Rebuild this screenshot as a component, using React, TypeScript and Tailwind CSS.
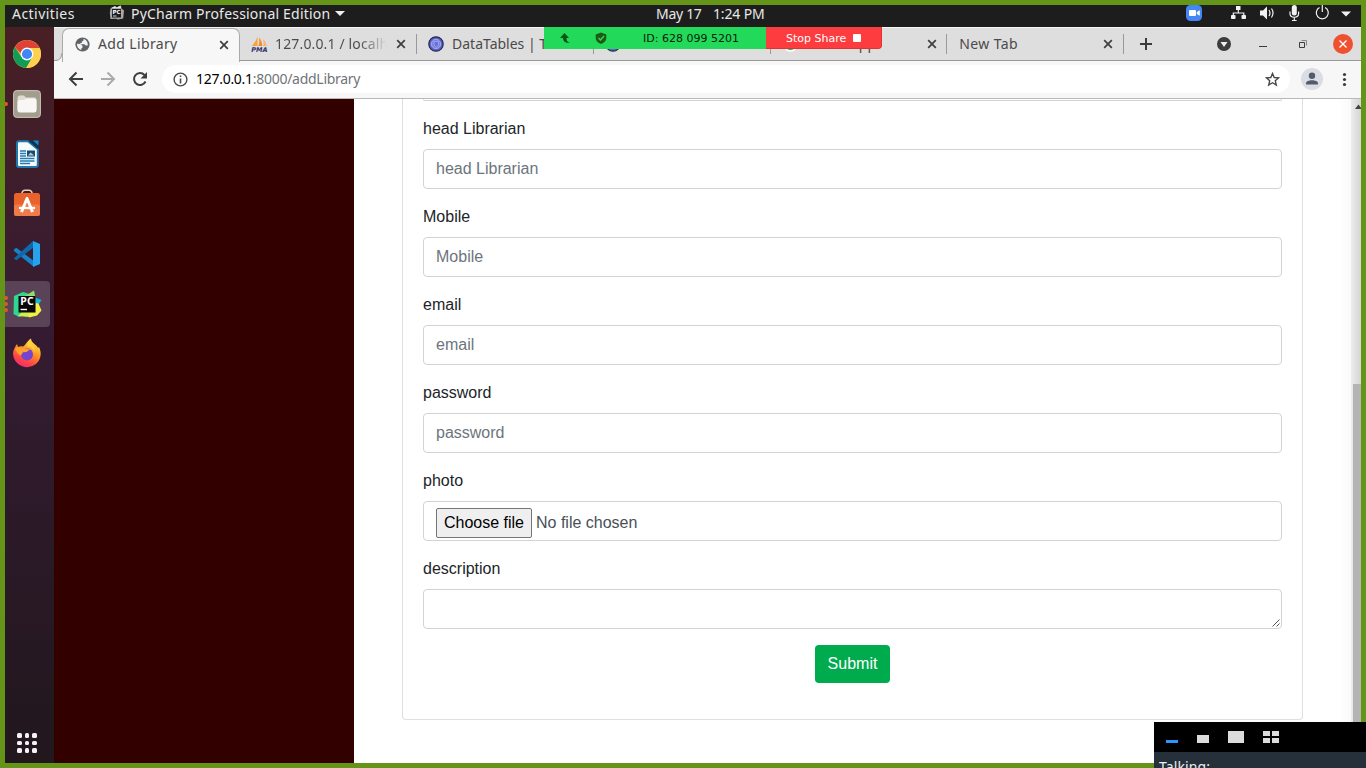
import React from "react";

type IconProps = { className?: string };

function Globe({ className = "" }: IconProps) {
  return (
    <svg className={className} width="15" height="15" viewBox="0 0 15 15">
      <circle cx="7.5" cy="7.5" r="7.1" fill="#5f6368" />
      <path d="M2 6.800 5.500 7 7.500 9v1.500l-1.200 1V13C3.800 12.500 2 10.300 2 7.600zM8.500 2v1.400L6.800 4.500v1.500H5.300v1.300h4l1.400 1.300h2C13.200 5 11 2.500 8.500 2z" fill="#f3f3f3" />
    </svg>
  );
}

function Close({ className = "" }: IconProps) {
  return (
    <svg className={className} width="10" height="10" viewBox="0 0 10 10">
      <path d="M1.200 1.200 8.800 8.800M8.800 1.200 1.200 8.800" stroke="#3c3f41" strokeWidth="1.7" />
    </svg>
  );
}

function PhpMyAdmin() {
  return (
    <svg width="17" height="16" viewBox="0 0 17 16" className="shrink-0">
      <path d="M6.500 .5V10H1C3 7.500 5 5 6.500 .5z" fill="#f9a13c" />
      <path d="M8 1.500c2 2 3.200 5 3.200 8.500H7.500C8.500 7 8.600 4.500 8 1.500z" fill="#f58a1f" />
      <path d="M12 3c2 2 3.500 4.500 3.700 7H12.200C12.800 7 12.600 5 12 3z" fill="#fbb468" />
      <text x="8.500" y="15.500" textAnchor="middle" fontFamily="DejaVu Sans" fontSize="6.500" fontWeight="bold" fontStyle="italic" fill="#31316b">PMA</text>
    </svg>
  );
}

function DataTablesMark() {
  return (
    <svg width="16" height="16" viewBox="0 0 16 16" className="shrink-0">
      <circle cx="8" cy="8" r="7.200" fill="#5960c9" stroke="#25264f" strokeWidth="1.200" />
      <circle cx="8" cy="8" r="4.700" fill="#7d84de" stroke="#a3a9ed" strokeWidth="1" />
      <path d="M6 5.500h4.500v3.500L8.500 11.500 6 9z" fill="#6a71d6" stroke="#b3b8f1" strokeWidth=".6" />
    </svg>
  );
}

function PyCharmMono() {
  return (
    <svg width="16" height="15" viewBox="0 0 16 15">
      <path d="M1.500 3.500 6 1.500l2 1 4-2 .5 3 2.500 2-.8 8L9 14.500l-2-.7L1.500 14 .800 8z" fill="#a9a9a9" />
      <path d="M2 3 6 1l1.500 1.500 4-2L12 3z" fill="#e4e4e4" />
      <rect x="3" y="4" width="9" height="8.500" fill="#1d1d1d" />
      <text x="7.500" y="9" textAnchor="middle" fontFamily="DejaVu Sans" fontWeight="bold" fontSize="5.500" fill="#fff">PC</text>
      <path d="M4 11h3.500" stroke="#fff" strokeWidth=".8" />
    </svg>
  );
}

function ChromeIcon() {
  return (
    <svg width="28" height="28" viewBox="0 0 28 28">
      <circle cx="14" cy="14" r="14" fill="#fbcb3f" />
      <path d="M1.900 7A14 14 0 0 1 26.100 7L26.500 8H14L8 14z" fill="#dd4437" />
      <path d="M1.900 7A14 14 0 0 0 13.200 28L19.500 17.200 14 20 8.500 17z" fill="#109d58" />
      <path d="M14 8h12.600A14 14 0 0 1 13.200 28l6-10.500z" fill="#fdd04d" />
      <circle cx="14" cy="14" r="6.400" fill="#fff" />
      <circle cx="14" cy="14" r="5.100" fill="#4086f4" />
    </svg>
  );
}

function FilesIcon() {
  return (
    <svg width="28" height="28" viewBox="0 0 28 28">
      <rect x=".6" y=".6" width="26.800" height="26.800" rx="3" fill="#a39d8e" stroke="#cbc6ba" strokeWidth="1" />
      <path d="M4.500 8a2.500 2.500 0 0 1 2.500-2.500h4l2 2h8a2.500 2.500 0 0 1 2.500 2.500v9a2.500 2.500 0 0 1-2.500 2.500H7a2.500 2.500 0 0 1-2.500-2.500z" fill="#dedbd3" />
      <path d="M4.500 12a2 2 0 0 1 2-2H11l2.500-1.500H21a2.500 2.500 0 0 1 2.500 2.500v9A2.500 2.500 0 0 1 21 22.500H7A2.500 2.500 0 0 1 4.500 20z" fill="#f8f7f5" />
    </svg>
  );
}

function WriterIcon() {
  return (
    <svg width="26" height="28" viewBox="0 0 26 28">
      <path d="M4 1.200h10l9.800 8V25a2 2 0 0 1-2 2H5a2 2 0 0 1-2-2V3a2 2 0 0 1 2-1.800z" fill="#f5fafd" stroke="#1f78ae" strokeWidth="2" />
      <path d="M14 .5h10.500v9z" fill="#0d3854" />
      <path d="M19 .5h5.500v5z" fill="#1d8bc9" />
      <path d="M6 11h6M6 13.500h6M6 16h6M6 18.500h14.500M6 21h14.500M6 23.500h10" stroke="#207cb4" strokeWidth="1.300" />
      <rect x="13" y="10.500" width="8" height="6" fill="#174d72" />
      <path d="M14 15.500 16.500 12.500l2 1.500 1.500 1.500z" fill="#9fcce8" />
    </svg>
  );
}

function SoftwareIcon() {
  return (
    <svg width="28" height="28" viewBox="0 0 28 28">
      <path d="M9 6V4.500A3 3 0 0 1 12 1.200h4a3 3 0 0 1 3 3.300V6" fill="none" stroke="#e9cfb4" strokeWidth="1.500" />
      <rect x="1" y="4" width="26" height="23" rx="2.500" fill="#e9622b" />
      <rect x="1" y="15.500" width="26" height="11.500" rx="2.500" fill="#f07b48" />
      <path d="M8.500 23 14 9.500l5.500 13.500" fill="none" stroke="#fff" strokeWidth="3" strokeLinejoin="round" />
      <path d="M6 19h16" stroke="#fff" strokeWidth="2.300" />
    </svg>
  );
}

function CodeIcon() {
  return (
    <svg width="28" height="28" viewBox="0 0 28 28">
      <path d="M.8 9.500 3.300 7.700 21 21v6L1 11z" fill="#1782c7" />
      <path d="M.8 18.500 20 1v7L3.300 20.300z" fill="#0d69ab" />
      <path d="M20 1 27 4v20l-7 3z" fill="#27a3ee" />
    </svg>
  );
}

function PyCharmIcon() {
  return (
    <svg width="29" height="28" viewBox="0 0 29 28">
      <path d="M1 6 10 2l5 1.500L11 25l-5 2-5.500-3z" fill="#32d78f" />
      <path d="M12 6 21 .5 22.500 8z" fill="#8be06a" />
      <path d="M9 22h13V8l4 5-2 12-8 2-11-1z" fill="#cdee4b" />
      <path d="M22 7.500 28.500 10 25.500 14.500 22.500 14z" fill="#15b8dc" />
      <path d="M16 22.500H22.500V13l3 .5 3 7L24 25.500l-8 2z" fill="#f4ef45" />
      <rect x="5.500" y="6" width="17" height="16.500" fill="#080808" />
      <text x="14" y="14.500" textAnchor="middle" fontFamily="Noto Sans" fontWeight="bold" fontSize="10.500" fill="#fff">PC</text>
      <path d="M7.500 19.500H14" stroke="#fff" strokeWidth="1.400" />
    </svg>
  );
}

function FirefoxIcon() {
  return (
    <svg width="30" height="30" viewBox="0 0 30 30">
      <defs>
        <linearGradient id="flame" x1=".75" y1="0" x2=".25" y2="1">
          <stop offset="0" stopColor="#fff04e" />
          <stop offset=".4" stopColor="#ff9b25" />
          <stop offset=".75" stopColor="#ff4545" />
          <stop offset="1" stopColor="#ef2677" />
        </linearGradient>
      </defs>
      <path d="M1 16C1 12 3 9 5 6L6 9C8 8 9 8 11 8.500 13 8 14 4 19 .5 19 5 25 6.500 26 10L27 9C30 15 29 21.500 24 26A14.200 14.200 0 0 1 1 16z" fill="url(#flame)" />
      <circle cx="15" cy="16.500" r="6" fill="#7545cf" />
      <path d="M3 11 6 9l3 1.500 6 .5 3 .5-3.500 2.500-3.500.3-2 3c-3-.5-4-3.500-6-6.300z" fill="#ffa22c" />
      <path d="M19 1c-1 6 4 7 4 13l-3-4c-2-2-4-1-4-1-2-3 1-7 3-8z" fill="#ffd13c" />
    </svg>
  );
}

function StatusIcons() {
  return (
    <svg width="170" height="22" viewBox="0 0 170 22" className="shrink-0">
      <rect x="1" y="0" width="16" height="16" rx="4.500" fill="#4486f6" />
      <rect x="4" y="5" width="7" height="6" rx="1" fill="#fff" />
      <path d="m11.800 7 3-1.800v5.600l-3-1.800z" fill="#fff" />
      <g fill="#f2f2f2">
        <rect x="51" y="1" width="4.500" height="4" />
        <rect x="46" y="10" width="4.500" height="4" rx=".8" />
        <rect x="56.500" y="10" width="4.500" height="4" rx=".8" />
        <path d="M75 5.500h3l4-4v13l-4-4h-3z" />
        <rect x="106.800" y="0" width="5" height="10.500" rx="2.500" />
        <path d="M156 6.500h10l-5 5z" />
      </g>
      <g fill="none" stroke="#f2f2f2" strokeWidth="1.200">
        <path d="M53.300 5v3M48.300 10V8h10.500v2" />
        <path d="M84 5q2 3 0 6M86.500 3.500q3 4.500 0 9" />
        <path d="M105 6.500v2c0 5 8.600 5 8.600 0v-2M109.300 12v4M107 15.500h4.600" />
        <path d="M134.500 2.500a6 6 0 1 0 5.600 0M137.300 0v7" />
      </g>
    </svg>
  );
}

const fields = ["head Librarian", "Mobile", "email", "password"];
const labelClass = "mb-2 block h-6 text-[16px] leading-6";
const boxClass = "block h-10 w-full rounded-[4px] border border-[#ced4da] bg-white px-3";

function Dock() {
  return (
    <aside className="flex w-[49px] shrink-0 flex-col items-center bg-linear-to-b from-[#481f24] via-[#351b32] via-40% to-[#21171d]">
      <div className="mt-[13px] flex h-[28px] w-[49px] items-center justify-center pr-[5px]"><ChromeIcon /></div>
      <div className="relative mt-[22px] flex h-[28px] w-full items-center justify-center pr-[5px]">
        <i className="absolute left-0 h-1 w-[3px] rounded-r-full bg-[#e95420]" />
        <FilesIcon />
      </div>
      <div className="mt-[22px] flex h-[28px] w-[49px] items-center justify-center pr-[5px]"><WriterIcon /></div>
      <div className="mt-[21px] flex h-[28px] w-[49px] items-center justify-center pr-[5px]"><SoftwareIcon /></div>
      <div className="mt-[23px] flex h-[28px] w-[49px] items-center justify-center pr-[5px]"><CodeIcon /></div>
      <div className="relative mt-[13px] mr-1 flex h-[46px] w-[45px] items-center justify-center rounded-r-[4px] bg-[#5a4356]">
        <span className="absolute left-0 flex flex-col gap-[2px]">
          <i className="h-1 w-[3px] rounded-r-full bg-[#e95420]" />
          <i className="h-1 w-[3px] rounded-r-full bg-[#e95420]" />
          <i className="h-1 w-[3px] rounded-r-full bg-[#e95420]" />
        </span>
        <PyCharmIcon />
      </div>
      <div className="mt-[11px] flex h-[30px] w-[49px] items-center justify-center pr-[5px]"><FirefoxIcon /></div>
      <div className="mt-auto mb-[10.500px] grid grid-cols-3 gap-[3px] pr-[5px]">
        {Array.from({ length: 9 }, (_, i) => (
          <i key={i} className="size-[4.500px] rounded-[1.500px] bg-[#f3f1f2]" />
        ))}
      </div>
    </aside>
  );
}

function Tabs() {
  return (
    <div className="flex h-[34px] shrink-0 border-t border-b border-t-[#f4f4f4] border-b-[#999] bg-[#dedede] font-['Noto_Sans',sans-serif] text-[14px] text-[#4a4a4a]">
      <svg className="z-10 h-[34px] w-2 shrink-0" viewBox="0 0 8 34"><path d="M0 32.500c5 0 8-1.500 8-7V34H0z" fill="#f7f7f7" /><path d="M0 32.500c5 0 7.500-1.500 7.500-7" fill="none" stroke="#999" /></svg>
      <div className="z-10 flex h-[34px] w-[178px] shrink-0 items-center rounded-t-[7px] border border-b-0 border-[#aaa] bg-[#f7f7f7] pb-[2px] pl-[12px]">
        <Globe />
        <span className="mb-[2px] ml-[8px] w-[121px] tracking-[0.36px] whitespace-nowrap">Add Library</span>
        <Close />
      </div>
      <div className="flex w-[177px] shrink-0 items-center pl-[11px]">
        <PhpMyAdmin />
        <span className="mb-[2px] ml-[7px] w-[112px] overflow-hidden bg-linear-to-r from-[#4a4a4a] from-75% to-[#dedede] bg-clip-text tracking-[0.150px] whitespace-nowrap text-transparent">127.0.0.1 / localh</span>
        <Close className="ml-[9px]" />
        <i className="ml-auto h-5 w-px bg-[#999]" />
      </div>
      <div className="flex w-[177px] items-center pl-[11px]">
        <DataTablesMark />
        <span className="mb-[2px] ml-2 w-[120px] whitespace-nowrap">DataTables | T</span>
        <i className="ml-auto h-5 w-px bg-[#999]" />
      </div>
      <div className="flex w-[177px] items-center pl-[11px]">
        <DataTablesMark />
        <i className="ml-auto h-5 w-px bg-[#999]" />
      </div>
      <div className="flex w-[177px] items-center pl-3">
        <svg width="15" height="15" viewBox="0 0 15 15"><circle cx="7.500" cy="7.500" r="6.500" fill="#25c565" stroke="#fff" strokeWidth="1.500" /></svg>
        <span className="mb-[2px] ml-[10px] w-[119px] tracking-[0.150px] whitespace-nowrap">WhatsApp</span>
        <Close />
        <i className="ml-auto h-5 w-px bg-[#999]" />
      </div>
      <div className="flex w-[177px] items-center pl-3">
        <span className="mb-[2px] w-[144px] tracking-[0.400px]">New Tab</span>
        <Close />
        <i className="ml-auto h-5 w-px bg-[#999]" />
      </div>
      <div className="flex flex-1 items-center pl-[15px]">
        <svg width="222" height="22" viewBox="0 0 222 22">
          <path d="M7 5v12M1 11h12" stroke="#3b3b3b" strokeWidth="2" />
          <circle cx="85" cy="11" r="7" fill="#3c3c3c" />
          <path d="M81.500 9h7L85 14z" fill="#eee" />
          <path d="M120 13.500h8" stroke="#3c3c3c" />
          <path d="M160.500 9.500h5v5h-5z" fill="none" stroke="#3c3c3c" />
          <path d="M162.500 7.500h5v5" fill="none" stroke="#888" />
          <circle cx="204" cy="11" r="10" fill="#ef5030" />
          <path d="m200.500 7.500 7 7m0-7-7 7" stroke="#fff" strokeWidth="1.400" />
        </svg>
      </div>
    </div>
  );
}

function Toolbar() {
  return (
    <div className="flex h-[38px] shrink-0 items-center border-b border-[#b9b9b9] bg-[#f7f7f7] pb-px pl-[14px]">
      <svg width="81" height="20" viewBox="0 0 81 20" fill="none" strokeWidth="2">
        <path d="M15 10H2m6.500-6.500L2 10l6.500 6.500" stroke="#3c4043" />
        <path d="M33 10h13m-6.500-6.500L46 10l-6.500 6.500" stroke="#aaa" />
        <path d="M77.500 12.500A6 6 0 1 1 76.500 6" stroke="#3c4043" />
        <path d="M79 3v6.500H72.500z" fill="#3c4043" />
      </svg>
      <div className="ml-[13px] flex h-7 w-[1128px] items-center rounded-full bg-white pl-[11px] font-['Noto_Sans',sans-serif] text-[14px]">
        <svg width="15" height="15" viewBox="0 0 15 15"><circle cx="7.500" cy="7.500" r="6.400" fill="none" stroke="#46494c" strokeWidth="1.400" /><path d="M7.500 6.500v5M7.500 3.400v1.700" stroke="#46494c" strokeWidth="1.600" /></svg>
        <span className="mb-px ml-[8px] tracking-[-0.280px] whitespace-nowrap text-black">127.0.0.1<span className="text-[#707478]">:8000/addLibrary</span></span>
        <svg className="mr-[10px] ml-auto" width="15" height="15" viewBox="0 0 15 15"><path d="m7.500 1.500 1.700 4 4.400.4-3.300 2.900 1 4.200-3.800-2.300L3.700 13l1-4.200L1.400 5.900l4.400-.4z" fill="none" stroke="#46494c" strokeWidth="1.400" /></svg>
      </div>
      <svg className="ml-[10px]" width="54" height="24" viewBox="0 0 54 24">
        <circle cx="12" cy="12" r="11" fill="#dadde3" />
        <circle cx="12" cy="8.800" r="3.200" fill="#525c6e" />
        <path d="M6 17.500v-1.300C6 12.200 18 12.200 18 16.200v1.300z" fill="#525c6e" />
        <g fill="#3c3c3c"><circle cx="44.500" cy="7.500" r="1.600" /><circle cx="44.500" cy="12.500" r="1.600" /><circle cx="44.500" cy="17.500" r="1.600" /></g>
      </svg>
    </div>
  );
}

function LibraryForm() {
  return (
    <main className="flex min-w-0 flex-1 items-start bg-white pl-12">
      <form className="h-[621px] w-[901px] rounded-b-[4px] border border-t-0 border-[#dfdfdf] px-5 font-['Liberation_Sans',sans-serif] text-[16px] text-[#212529]" onSubmit={(e) => e.preventDefault()}>
        <div className="mb-4 h-[2px] rounded-b-[4px] border border-t-0 border-[#ced4da]" />
        {fields.map((name) => (
          <div key={name} className="mb-4">
            <label className={labelClass}>{name}</label>
            <input className={boxClass + " placeholder:text-[#6c757d] placeholder:opacity-100"} placeholder={name} />
          </div>
        ))}
        <div className="mb-4">
          <label className={labelClass}>photo</label>
          <div className="flex h-10 items-start rounded-[4px] border border-[#ced4da] px-3 pt-[6px]">
            <button className="h-[30px] w-24 rounded-[2px] border border-[#767676] bg-[#efefef] whitespace-nowrap text-black" type="button">Choose file</button>
            <span className="ml-1 leading-[30px] text-[#495057]">No file chosen</span>
          </div>
        </div>
        <div className="mb-4">
          <label className={labelClass}>description</label>
          <div className="flex h-10 items-end justify-end rounded-[4px] border border-[#ced4da] pr-px pb-px">
            <svg width="8" height="8" viewBox="0 0 8 8"><path d="M.5 7.500l7-7M4.500 7.500l3-3" stroke="#555" strokeWidth="1" /></svg>
          </div>
        </div>
        <button className="mx-auto block h-[38px] w-[75px] rounded-[4px] bg-[#00ab4e] text-white" type="submit">Submit</button>
      </form>
      <div className="ml-auto flex h-full w-[21px] bg-linear-to-r from-white to-[#f4f4f4] pl-[11px]">
        <div className="flex w-[10px] flex-col items-end bg-linear-to-r from-[#ececec] to-[#d5d5d5]">
          <svg width="8" height="12" viewBox="0 0 8 12"><path d="M2 10h7L5.500 5.500z" fill="#444" /></svg>
          <i className="mt-[273px] w-2 flex-1 bg-[#b4b4b4]" />
        </div>
      </div>
    </main>
  );
}

function ShareBar() {
  return (
    <div className="absolute top-[27px] left-[544px] z-20 flex h-[22px] w-[338px] font-['DejaVu_Sans',sans-serif] text-[11px]">
      <div className="flex w-[222px] items-center bg-[#23d959] text-[#04220b]">
        <svg width="99" height="22" viewBox="0 0 99 22">
          <path d="M20.500 6 16 11h3c0 3 2 5 7 5-3-1-3.500-2.500-3.500-5H25z" fill="#075715" />
          <path d="M57 5.500 62.300 7.500V11c0 3-2.300 5-5.300 6-3-1-5.300-3-5.300-6V7.500z" fill="#1f5a15" />
          <path d="m54.500 11 2 2 3.500-4" fill="none" stroke="#2ddb5d" strokeWidth="1.400" />
        </svg>
        <span className="mt-[2px] whitespace-nowrap">ID: 628 099 5201</span>
      </div>
      <div className="flex flex-1 items-center rounded-br-[4px] border-r border-b border-[#e53030] bg-[#fc3c3e] pt-px pl-5 whitespace-nowrap text-white">
        <span className="mt-[2px]">Stop Share</span><i className="ml-[7px] size-2 rounded-[1px] bg-white" />
      </div>
    </div>
  );
}

function TalkingPanel() {
  return (
    <div className="absolute right-0 bottom-0 z-40 h-[46px] w-[212px] overflow-hidden bg-[#25303b] font-['Noto_Sans',sans-serif]">
      <div className="flex h-[30px] bg-black">
        <svg width="130" height="30" viewBox="0 0 130 30" fill="#dcdcdc">
          <path d="M12 18h12v3H12z" fill="#2997ff" />
          <path d="M43 13h12v8H43zM74 9h16v12H74zM109 9h7v5h-7zM118 9h7v5h-7zM109 16h7v5h-7zM118 16h7v5h-7z" />
        </svg>
      </div>
      <p className="mt-[5px] pl-[5px] text-[14px] leading-[20px] tracking-[0.100px] text-[#eee]">Talking:</p>
    </div>
  );
}

export default function App() {
  return (
    <div className="relative h-[768px] w-[1366px] overflow-hidden">
      <div className="flex h-full flex-col border-[5px] border-[#649518] bg-white">
        <header className="flex h-[22px] shrink-0 items-start bg-[#1d1d1d] font-['Noto_Sans',sans-serif] text-[14px] leading-[17px] text-[#e8e8e8]">
          <span className="ml-[7px] w-[97px] tracking-[0.450px]">Activities</span>
          <PyCharmMono />
          <span className="ml-[6px] w-[199px] tracking-[0.200px] whitespace-nowrap">PyCharm Professional Edition</span>
          <svg className="mt-[6px] ml-[5px]" width="10" height="5" viewBox="0 0 10 5"><path d="M0 0h10L5 5z" fill="#eee" /></svg>
          <span className="ml-[311px] w-[57px] tracking-[-0.300px] whitespace-nowrap">May 17</span>
          <span className="tracking-[-0.150px] whitespace-nowrap">1:24 PM</span>
          <span className="ml-auto h-[22px] w-[176px]"><StatusIcons /></span>
        </header>
        <div className="flex min-h-0 flex-1">
          <Dock />
          <section className="flex min-w-0 flex-1 flex-col">
            <Tabs />
            <Toolbar />
            <div className="flex min-h-0 flex-1">
              <div className="w-[300px] shrink-0 bg-[#330000]" />
              <LibraryForm />
            </div>
          </section>
        </div>
      </div>
      <ShareBar />
      <TalkingPanel />
    </div>
  );
}
